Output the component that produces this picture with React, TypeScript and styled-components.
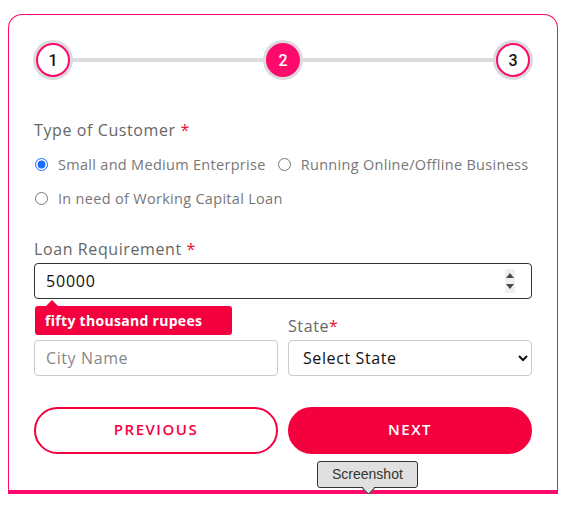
import styled, { createGlobalStyle } from 'styled-components';

const PINK = '#ff0a6c';
const RED = '#f5003f';

const GlobalStyle = createGlobalStyle`
  * { box-sizing: border-box; }
  body {
    margin: 0;
    background: #fff;
    font-family: 'Open Sans', 'Noto Sans', sans-serif;
  }
`;

const steps = [1, 2, 3];
const customerTypes = [
  'Small and Medium Enterprise',
  'Running Online/Offline Business',
  'In need of Working Capital Loan',
];

export default function App() {
  return (
    <Page>
      <GlobalStyle />
      <Card>
        <Stepper>
          {steps.map((n, i) => (
            <StepGroup key={n} last={i === steps.length - 1}>
              <StepCircle active={n === 2}>{n}</StepCircle>
              {i < steps.length - 1 && <StepLine />}
            </StepGroup>
          ))}
        </Stepper>

        <Section>
          <Label>
            Type of Customer <Required>*</Required>
          </Label>
          <RadioGroup>
            {customerTypes.map((t, i) => (
              <RadioOption key={t}>
                <Radio type="radio" name="customer" defaultChecked={i === 0} />
                {t}
              </RadioOption>
            ))}
          </RadioGroup>
        </Section>

        <LoanSection>
          <Label>
            Loan Requirement <Required>*</Required>
          </Label>
          <NumberField>
            <NumberInput type="text" defaultValue="50000" />
            <Spinner>
              <svg width="8" height="18" viewBox="0 0 8 18">
                <path d="M0 6 L4 1 L8 6 Z" fill="#4a4a4a" />
                <path d="M0 12 L4 17 L8 12 Z" fill="#4a4a4a" />
              </svg>
            </Spinner>
          </NumberField>
          <AmountTip>fifty thousand rupees</AmountTip>
        </LoanSection>

        <FieldRow>
          <Field>
            <Label />
            <TextInput placeholder="City Name" />
          </Field>
          <Field>
            <Label>
              State<Required>*</Required>
            </Label>
            <Select defaultValue="">
              <option value="">Select State</option>
            </Select>
          </Field>
        </FieldRow>

        <ButtonRow>
          <NavButton>Previous</NavButton>
          <NavButton primary>Next</NavButton>
        </ButtonRow>

        <ScreenshotTip>Screenshot</ScreenshotTip>
      </Card>
    </Page>
  );
}

const Page = styled.div`
  padding: 14px 0 0 8px;
`;

const Card = styled.div`
  position: relative;
  width: 550px;
  border: 1px solid ${PINK};
  border-bottom: 4px solid ${PINK};
  border-radius: 14px 14px 0 0;
  padding: 28px 25px 36px;
`;

const Stepper = styled.div`
  display: flex;
  align-items: center;
  padding: 0 2px;
  height: 34px;
`;

const StepGroup = styled.div<{ last: boolean }>`
  display: flex;
  align-items: center;
  flex: ${(p) => (p.last ? '0 0 auto' : '1')};
`;

const StepCircle = styled.div<{ active: boolean }>`
  width: 34px;
  height: 34px;
  border-radius: 50%;
  border: 2px solid ${PINK};
  background: ${(p) => (p.active ? PINK : '#fff')};
  color: ${(p) => (p.active ? '#fff' : '#111')};
  box-shadow: 0 0 0 3px #dcdcdc;
  display: flex;
  align-items: center;
  justify-content: center;
  font-family: Roboto, sans-serif;
  font-size: 16px;
  font-weight: 500;
  flex: 0 0 auto;
  position: relative;
  z-index: 1;
`;

const StepLine = styled.div`
  flex: 1;
  height: 4px;
  background: #dcdcdc;
`;

const Section = styled.div`
  margin-top: 41px;
`;

const Label = styled.div`
  height: 24px;
  line-height: 24px;
  font-size: 16px;
  letter-spacing: 0.6px;
  color: #666;
`;

const Required = styled.span`
  color: #e8112d;
`;

const RadioGroup = styled.div`
  display: flex;
  flex-wrap: wrap;
  column-gap: 11px;
  row-gap: 10px;
  margin-top: 10px;
`;

const RadioOption = styled.label`
  display: flex;
  align-items: center;
  gap: 10px;
  height: 24px;
  font-size: 14.5px;
  letter-spacing: 0.3px;
  white-space: nowrap;
  color: #777;
`;

const Radio = styled.input`
  margin: 0 0 0 1px;
  width: 13px;
  height: 13px;
  accent-color: #1a6cff;
`;

const LoanSection = styled.div`
  position: relative;
  margin-top: 27px;
`;

const NumberField = styled.div`
  display: flex;
  align-items: center;
  height: 36px;
  margin-top: 2px;
  border: 1px solid #333;
  border-radius: 4px;
  padding: 0 16px 0 11px;
`;

const NumberInput = styled.input`
  flex: 1;
  border: none;
  outline: none;
  font-family: inherit;
  font-size: 16px;
  letter-spacing: 0.8px;
  color: #111;
  padding: 0;
  background: transparent;
`;

const Spinner = styled.div`
  width: 10px;
  height: 24px;
  background: #f0f0f0;
  display: flex;
  align-items: center;
  justify-content: center;
`;

const AmountTip = styled.div`
  position: absolute;
  left: 1px;
  top: 69px;
  z-index: 2;
  width: 197px;
  height: 29px;
  line-height: 29px;
  padding-left: 10px;
  background: ${RED};
  color: #fff;
  font-size: 14px;
  font-weight: 700;
  letter-spacing: 0.3px;
  border-radius: 3px;

  &::before {
    content: '';
    position: absolute;
    left: 11px;
    top: -6px;
    border-left: 6px solid transparent;
    border-right: 6px solid transparent;
    border-bottom: 6px solid ${RED};
  }
`;

const FieldRow = styled.div`
  display: grid;
  grid-template-columns: 1fr 1fr;
  column-gap: 10px;
  margin-top: 15px;
`;

const Field = styled.div`
  display: flex;
  flex-direction: column;
  gap: 2px;
`;

const TextInput = styled.input`
  height: 36px;
  border: 1px solid #ccc;
  border-radius: 4px;
  padding: 0 11px;
  font-family: inherit;
  font-size: 16px;
  letter-spacing: 0.6px;
  color: #111;
  outline: none;

  &::placeholder {
    color: #888;
  }
`;

const Select = styled.select`
  height: 36px;
  border: 1px solid #ccc;
  border-radius: 4px;
  padding: 0 10px;
  font-family: inherit;
  font-size: 16px;
  letter-spacing: 0.6px;
  color: #111;
  background: #fff;
  outline: none;
`;

const ButtonRow = styled.div`
  display: grid;
  grid-template-columns: 1fr 1fr;
  column-gap: 10px;
  margin-top: 31px;
`;

const NavButton = styled.button<{ primary?: boolean }>`
  height: 47px;
  padding: 0 0 3px;
  border-radius: 24px;
  border: 2px solid ${RED};
  background: ${(p) => (p.primary ? RED : '#fff')};
  color: ${(p) => (p.primary ? '#fff' : RED)};
  font-family: inherit;
  font-size: 15px;
  font-weight: 600;
  letter-spacing: 1.5px;
  text-transform: uppercase;
  cursor: pointer;
`;

const ScreenshotTip = styled.div`
  position: absolute;
  left: 308px;
  bottom: 2px;
  height: 27px;
  padding: 0 14px;
  line-height: 25px;
  background: #e0e0e0;
  border: 1px solid #333;
  border-radius: 3px;
  font-family: 'Liberation Sans', Arial, sans-serif;
  font-size: 14px;
  color: #333;

  &::after {
    content: '';
    position: absolute;
    left: 46px;
    bottom: -6px;
    width: 8px;
    height: 8px;
    background: #e0e0e0;
    border-right: 1px solid #333;
    border-bottom: 1px solid #333;
    transform: rotate(45deg);
  }
`;
